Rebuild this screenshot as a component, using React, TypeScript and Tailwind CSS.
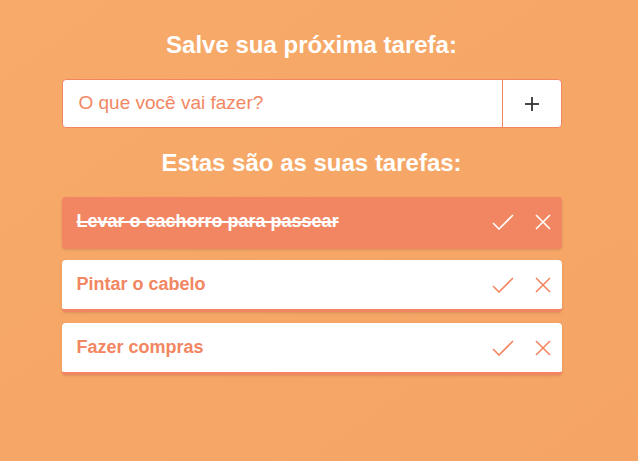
import { useState } from "react";

interface Task {
  id: number;
  text: string;
  done: boolean;
}

function CheckIcon({ className }: { className?: string }) {
  return (
    <svg viewBox="0 0 22 16" className={className} fill="none" stroke="currentColor" strokeWidth={1.6}>
      <polyline points="1,9 7,15 21,1" />
    </svg>
  );
}

function CloseIcon({ className }: { className?: string }) {
  return (
    <svg viewBox="0 0 16 16" className={className} fill="none" stroke="currentColor" strokeWidth={1.6}>
      <line x1="1" y1="1" x2="15" y2="15" />
      <line x1="15" y1="1" x2="1" y2="15" />
    </svg>
  );
}

function TaskItem({ task }: { task: Task }) {
  return (
    <li
      className={`flex items-center justify-between h-[52px] pl-[15px] pr-[11px] rounded border-b-[3px] border-[#f38662] shadow-sm ${
        task.done ? "bg-[#f38662] text-white" : "bg-white text-[#f38662]"
      }`}
    >
      <span className={`text-[18px] font-bold ${task.done ? "line-through decoration-2" : ""}`}>
        {task.text}
      </span>
      <div className="flex items-center gap-[21px]">
        <button className="flex items-center">
          <CheckIcon className="w-[22px] h-[16px]" />
        </button>
        <button className="flex items-center">
          <CloseIcon className="w-[16px] h-[16px]" />
        </button>
      </div>
    </li>
  );
}

export default function App() {
  const [tasks] = useState<Task[]>([
    { id: 1, text: "Levar o cachorro para passear", done: true },
    { id: 2, text: "Pintar o cabelo", done: false },
    { id: 3, text: "Fazer compras", done: false },
  ]);

  return (
    <div
      className="min-h-[461px] w-full bg-gradient-to-br from-[#f7aa69] to-[#f5a465] flex justify-center pt-[29px] pr-[15px]"
      style={{ fontFamily: '"Liberation Sans", Arial, sans-serif' }}
    >
      <div className="w-[500px] flex flex-col">
        <h1 className="text-white text-[24px] font-bold text-center leading-[32px]">
          Salve sua próxima tarefa:
        </h1>
        <form className="mt-[18px] flex h-[49px] bg-white border border-[#f38662] rounded">
          <input
            className="flex-1 px-4 text-[19px] text-[#f38662] placeholder:text-[#f38662] outline-none bg-transparent"
            placeholder="O que você vai fazer?"
          />
          <button type="button" className="w-[59px] border-l border-[#f38662] flex items-center justify-center">
            <svg viewBox="0 0 14 14" className="w-[14px] h-[14px]" stroke="#333" strokeWidth={1.8}>
              <line x1="7" y1="0" x2="7" y2="14" />
              <line x1="0" y1="7" x2="14" y2="7" />
            </svg>
          </button>
        </form>
        <h2 className="mt-[19px] text-white text-[24px] font-bold text-center leading-[32px]">
          Estas são as suas tarefas:
        </h2>
        <ul className="mt-[18px] flex flex-col gap-[11px]">
          {tasks.map((t) => (
            <TaskItem key={t.id} task={t} />
          ))}
        </ul>
      </div>
    </div>
  );
}
